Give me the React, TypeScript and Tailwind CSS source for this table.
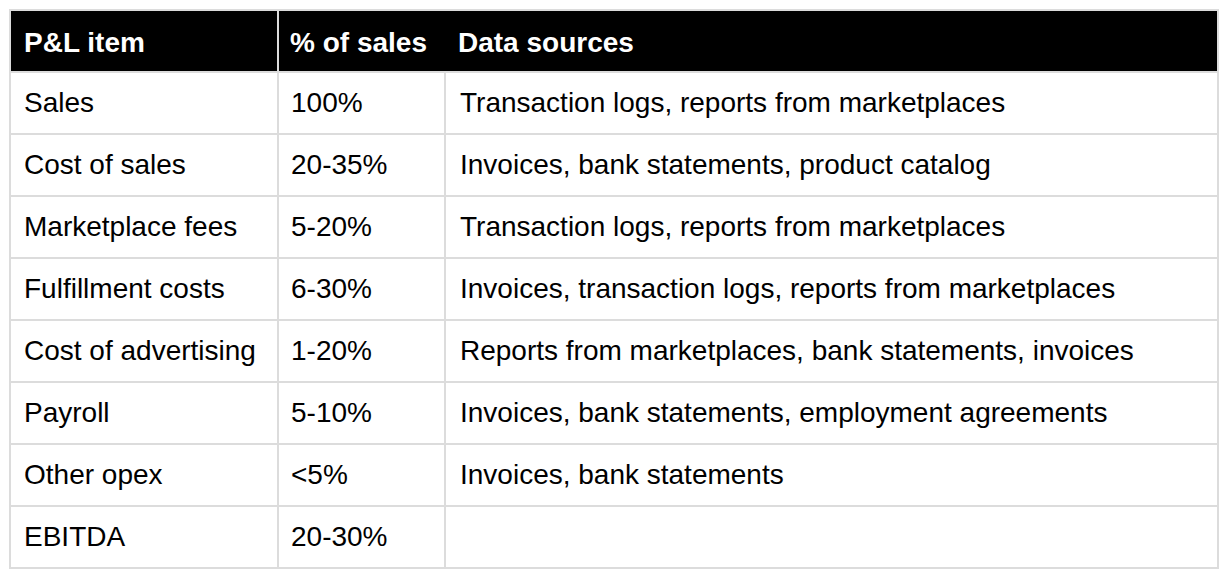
const rows: [string, string, string][] = [
  ['Sales', '100%', 'Transaction logs, reports from marketplaces'],
  ['Cost of sales', '20-35%', 'Invoices, bank statements, product catalog'],
  ['Marketplace fees', '5-20%', 'Transaction logs, reports from marketplaces'],
  ['Fulfillment costs', '6-30%', 'Invoices, transaction logs, reports from marketplaces'],
  ['Cost of advertising', '1-20%', 'Reports from marketplaces, bank statements, invoices'],
  ['Payroll', '5-10%', 'Invoices, bank statements, employment agreements'],
  ['Other opex', '<5%', 'Invoices, bank statements'],
  ['EBITDA', '20-30%', ''],
];

export default function App() {
  return (
    <div className="w-[1230px] h-[576px] bg-white pt-[9px] pl-[9px] font-['Liberation_Sans',Arial,sans-serif] text-black">
      <table className="table-fixed border-collapse w-[1210px] text-[28px] leading-none">
        <colgroup>
          <col className="w-[268px]" />
          <col className="w-[167px]" />
          <col />
        </colgroup>
        <thead>
          <tr className="bg-black text-white h-[62px]">
            <th className="border-2 border-[#dcdcdc] text-left font-bold px-[13px] pt-[3px]">P&amp;L item</th>
            <th className="border-y-2 border-[#dcdcdc] text-left font-bold px-[11px] pt-[3px]">% of sales</th>
            <th className="border-2 border-l-0 border-[#dcdcdc] text-left font-bold px-[13px] pt-[3px]">Data sources</th>
          </tr>
        </thead>
        <tbody>
          {rows.map(([item, pct, src]) => (
            <tr key={item} className="h-[62px]">
              <td className="border-2 border-[#dcdcdc] px-[13px]">{item}</td>
              <td className="border-2 border-[#dcdcdc] px-[12px]">{pct}</td>
              <td className="border-2 border-[#dcdcdc] px-[14px]">{src}</td>
            </tr>
          ))}
        </tbody>
      </table>
    </div>
  );
}
